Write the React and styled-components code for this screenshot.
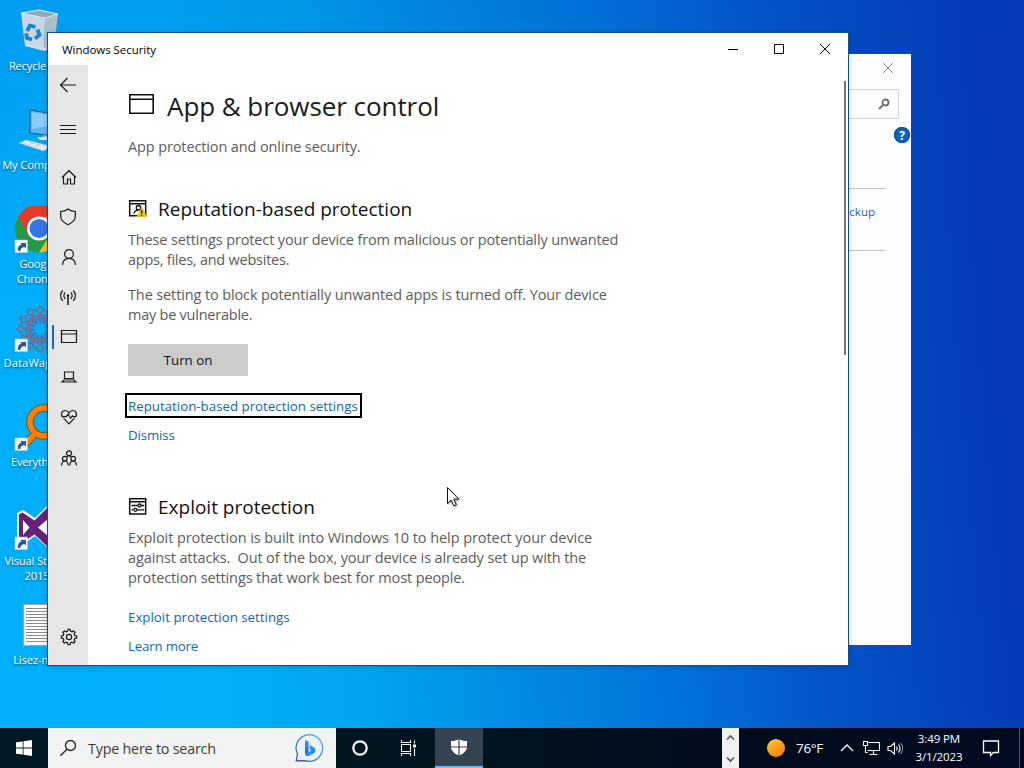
import React from 'react';
import styled, { createGlobalStyle } from 'styled-components';

const GlobalStyle = createGlobalStyle`
  body {
    margin: 0;
    overflow: hidden;
    font-family: 'Open Sans', 'Noto Sans', sans-serif;
  }
`;

const Desktop = styled.div`
  position: relative;
  display: flex;
  flex-direction: column;
  width: 1024px;
  height: 768px;
  overflow: hidden;
  background:
    linear-gradient(to bottom, rgba(0, 70, 190, 0.16) 0%, rgba(0, 70, 190, 0) 40%),
    linear-gradient(85deg, #00aefb 0%, #00aff8 21%, #00a5f0 34%, #0091e5 45%, #0072d8 63%, #0455c8 76%, #0445be 87%, #033ab4 95%, #0338b2 100%);
`;

const Workspace = styled.div`
  position: relative;
  flex: 1;
`;

const IconColumn = styled.div`
  display: flex;
  flex-direction: column;
  width: 74px;
  padding-top: 8px;
`;

const Shortcut = styled.div`
  display: flex;
  flex-direction: column;
  align-items: center;
  gap: 2px;
  height: 99px;
  font-size: 11.2px;
  line-height: 15px;
  letter-spacing: ${(p) => p.$track || -0.15}px;
  color: #fff;
  text-align: center;
  white-space: pre;
  text-shadow: 0 1px 2px rgba(0, 0, 0, 0.6);

  svg {
    flex: none;
  }
`;

/* ---- windows ---- */

const BackWindow = styled.div`
  position: absolute;
  left: 600px;
  top: 54px;
  width: 311px;
  height: 591px;
  box-sizing: border-box;
  display: flex;
  flex-direction: column;
  align-items: flex-end;
  background: #fefefe;
`;

const BackClose = styled.div`
  display: flex;
  padding: 8px 17px 0 0;
  height: 27px;
`;

const BackSearch = styled.div`
  display: flex;
  align-items: center;
  justify-content: flex-end;
  width: 260px;
  height: 30px;
  margin-right: 12px;
  padding-right: 8px;
  box-sizing: border-box;
  border: 1px solid #d2d2d2;
`;

const Help = styled.div`
  display: flex;
  align-items: center;
  justify-content: center;
  width: 16px;
  height: 16px;
  margin: 8px 1px 45px 0;
  border-radius: 50%;
  background: #0a63b4;
  box-shadow: inset 0 0 0 1px #084d90;
  color: #fff;
  font-size: 12px;
  font-weight: 700;
`;

const BackPanel = styled.div`
  display: flex;
  justify-content: flex-end;
  width: 250px;
  height: 63px;
  margin-right: 26px;
  padding: 15px 10px 0 0;
  box-sizing: border-box;
  border-top: 1px solid #c4c4c4;
  border-bottom: 1px solid #c4c4c4;
  color: #1a5fb8;
  font-size: 11.5px;
  line-height: 16px;
`;

const Window = styled.div`
  position: absolute;
  left: 47px;
  top: 32px;
  width: 802px;
  height: 634px;
  box-sizing: border-box;
  display: flex;
  flex-direction: column;
  border: 1px solid #14507f;
  background: #fff;
  box-shadow: 0 1px 5px rgba(0, 0, 40, 0.2);
`;

const TitleBar = styled.div`
  display: flex;
  align-items: center;
  height: 32px;
  padding-left: 14px;
  font-size: 11.5px;
  color: #000;
`;

const TitleText = styled.span`
  flex: 1;
  letter-spacing: -0.05px;
`;

const WindowButton = styled.div`
  display: flex;
  align-items: center;
  justify-content: center;
  width: 46px;
  height: 32px;
`;

const WindowBody = styled.div`
  display: flex;
  flex: 1;
  min-height: 0;
`;

const Sidebar = styled.div`
  display: flex;
  flex-direction: column;
  width: 40px;
  padding-bottom: 8px;
  box-sizing: border-box;
  background: #e6e6e6;
`;

const NavItem = styled.div`
  display: flex;
  align-items: center;
  justify-content: center;
  height: 40px;
  margin-top: ${(p) => p.$gap || 0}px;
  padding-left: ${(p) => (p.$flush ? 0 : 2)}px;
  box-sizing: border-box;
  background: ${(p) =>
    p.$active ? 'linear-gradient(#1a66b8, #1a66b8) 4px 8px / 2px 24px no-repeat' : 'none'};
`;

const Spacer = styled.div`
  flex: 1;
`;

const Content = styled.div`
  flex: 1;
  padding: 23px 0 0 40px;
  overflow: hidden;
`;

const PageTitle = styled.div`
  display: flex;
  align-items: center;
  gap: 12px;
  height: 36px;
  font-size: 26px;
  font-weight: 400;
  line-height: 36px;
  letter-spacing: -0.06px;
  color: #1a1a1a;
  white-space: nowrap;

  svg {
    margin-bottom: 4px;
  }
`;

const SectionTitle = styled.div`
  display: flex;
  align-items: center;
  gap: 11px;
  height: 28px;
  margin-top: ${(p) => p.$top}px;
  font-size: 19px;
  line-height: 28px;
  color: #111;
  white-space: nowrap;

  svg {
    margin-bottom: 2px;
  }
`;

const Text = styled.div`
  margin-top: ${(p) => p.$top || 0}px;
  font-size: 14.5px;
  line-height: 20px;
  letter-spacing: ${(p) => p.$track || -0.12}px;
  color: #5c5c5c;
  white-space: pre;
`;

const ActionButton = styled.div`
  display: flex;
  align-items: center;
  justify-content: center;
  width: 120px;
  height: 32px;
  margin-top: 19px;
  background: #cbcbcb;
  font-size: 13.3px;
  color: #111;
`;

const Link = styled.div`
  width: max-content;
  margin-top: ${(p) => p.$top}px;
  font-size: 13.3px;
  line-height: 21px;
  letter-spacing: ${(p) => p.$track || 0}px;
  color: #1068ae;
  white-space: nowrap;
`;

const FocusedLink = styled(Link)`
  width: 237px;
  height: 25px;
  margin-left: -3px;
  padding: 1px 0 0 1px;
  box-sizing: border-box;
  border: 2px solid #000;
`;

const ScrollTrack = styled.div`
  width: 4px;
  padding-top: 16px;
`;

const ScrollThumb = styled.div`
  width: 2px;
  height: 274px;
  background: #757575;
`;

const Cursor = styled.svg`
  position: absolute;
  left: 446px;
  top: 486px;
  filter: drop-shadow(1px 1px 1px rgba(0, 0, 0, 0.35));
`;

/* ---- taskbar ---- */

const Taskbar = styled.div`
  display: flex;
  align-items: stretch;
  height: 40px;
  background: linear-gradient(90deg, #001824 0%, #00141f 45%, #000c1c 70%, #010a20 100%);
  color: #fff;
`;

const TaskButton = styled.div`
  display: flex;
  align-items: center;
  justify-content: center;
  width: ${(p) => p.$w || 48}px;
  margin-left: ${(p) => p.$left || 0}px;
  box-sizing: border-box;
  background: ${(p) => (p.$active ? '#344450' : 'none')};
  border-bottom: ${(p) => (p.$active ? '2px solid #7bb9ec' : 'none')};
`;

const SearchBox = styled.div`
  display: flex;
  align-items: center;
  width: 288px;
  padding: 0 12px 0 11px;
  box-sizing: border-box;
  background: #f2f3f3;
  color: #3c3c3c;
  font-size: 14.3px;
`;

const SearchLabel = styled.span`
  flex: 1;
  margin-left: 11px;
  letter-spacing: -0.2px;
`;

const DeskScroll = styled.div`
  display: flex;
  flex-direction: column;
  align-items: center;
  justify-content: space-between;
  width: 17px;
  margin-left: 239px;
  padding: 6px 0 5px;
  box-sizing: border-box;
  background: #f1f1f1;
`;

const Tray = styled.div`
  display: flex;
  flex: 1;
  align-items: center;
`;

const Sun = styled.div`
  width: 18px;
  height: 18px;
  margin: 0 11px 0 28px;
  border-radius: 50%;
  background: linear-gradient(150deg, #ffc52e 10%, #f7941d 60%, #ee7a12 100%);
`;

const Temperature = styled.span`
  width: 44px;
  font-size: 13.5px;
  letter-spacing: -0.3px;
`;

const Clock = styled.div`
  width: 62px;
  margin-left: 4px;
  font-size: 11.6px;
  line-height: 18px;
  letter-spacing: -0.15px;
  text-align: center;
  white-space: nowrap;
`;

const ShowDesktop = styled.div`
  width: 4px;
  height: 40px;
  margin-left: auto;
  border-left: 1px solid #4d5a6b;
`;

/* ---- icons ---- */

const Glyph = ({ w = 18, h = w, children, color = '#1a1a1a', sw = 1.2 }) => (
  <svg width={w} height={h} viewBox={`0 0 ${w} ${h}`} fill="none" stroke={color} strokeWidth={sw}>
    {children}
  </svg>
);

const BackIcon = () => (
  <Glyph w={18}>
    <path d="M17 9H1.500M8.500 2 1.500 9l7 7" />
  </Glyph>
);

const MenuIcon = () => (
  <Glyph w={18}>
    <path d="M1 5.500h16M1 9.500h16M1 13.500h16" shapeRendering="crispEdges" />
  </Glyph>
);

const HomeIcon = () => (
  <Glyph w={18}>
    <path d="M2 9.500 9 2.700l7 6.800M3.500 8.500V16h4v-5h3v5h4V8.500" />
  </Glyph>
);

const ShieldIcon = () => (
  <Glyph w={18}>
    <path d="M9 1c2 1.600 4.500 2.400 7.300 2.500v4.800c0 3.700-2.900 6.400-7.300 8.400-4.400-2-7.300-4.700-7.300-8.400V3.500C4.500 3.400 7 2.600 9 1z" />
  </Glyph>
);

const PersonIcon = () => (
  <Glyph w={18}>
    <circle cx="9" cy="6" r="4.400" />
    <path d="M2.500 17c.3-4 2.900-6.600 6.500-6.600s6.200 2.600 6.500 6.600" />
  </Glyph>
);

const SignalIcon = () => (
  <Glyph w={18}>
    <path d="M9 8v9" strokeWidth="1.500" />
    <circle cx="9" cy="7.500" r="1.200" fill="#1a1a1a" stroke="none" />
    <path d="M6.300 4.500a4.300 4.300 0 0 0 0 6.400M11.700 4.500a4.300 4.300 0 0 1 0 6.400M3.800 2.500a7.300 7.300 0 0 0 0 10.400M14.200 2.500a7.300 7.300 0 0 1 0 10.400" />
  </Glyph>
);

const BrowserIcon = () => (
  <Glyph w={18}>
    <path d="M1.500 2.500h15v12h-15zM1.500 6h15" />
  </Glyph>
);

const LaptopIcon = () => (
  <Glyph w={18}>
    <path d="M4.500 4h9v6.500h-9zM4 12h10l2 2H2z" />
  </Glyph>
);

const HeartIcon = () => (
  <Glyph w={18}>
    <path d="M2.300 8.300C.8 6 1.700 3 4.400 2.600 6.500 2.200 8 3.300 9 5c1-1.700 2.500-2.800 4.600-2.400C16.300 3 17.200 6 15.700 8.300M3.500 10.200 9 15.800l5.500-5.600M1.500 8.700h4.700l2-2.400 2.500 3.900 1.900-2.400 1 .9h2.900" />
  </Glyph>
);

const FamilyIcon = () => (
  <Glyph w={18}>
    <circle cx="9" cy="4.300" r="2.500" />
    <circle cx="4.800" cy="9.700" r="2.300" />
    <circle cx="13.200" cy="9.700" r="2.300" />
    <path d="M1.500 16.500c.2-2.700 1.300-4.500 3.300-4.500S8 13.800 8.200 16.500M9.800 16.500c.2-2.700 1.400-4.500 3.400-4.500s3.100 1.800 3.300 4.500M6.800 7.700c.7-.8 1.400-1.100 2.200-1.100s1.500.3 2.200 1.100" />
  </Glyph>
);

const GearIcon = () => (
  <Glyph w={18}>
    <path
      d="M7.560 3.190 7.900 1.380h2.200l.34 1.810 1.650.68 1.520-1.040 1.560 1.560-1.040 1.520.68 1.650 1.810.34v2.200l-1.810.34-.68 1.650 1.040 1.520-1.560 1.560-1.520-1.040-1.650.68-.34 1.810H7.900l-.34-1.810-1.650-.68-1.520 1.040-1.560-1.560 1.040-1.520-.68-1.650-1.810-.34V7.900l1.810-.34.68-1.650-1.040-1.520 1.560-1.560 1.520 1.040z"
      strokeLinejoin="round"
    />
    <circle cx="9" cy="9" r="2.600" />
  </Glyph>
);

const PageIcon = () => (
  <svg width="27" height="22" fill="none" stroke="#111" strokeWidth="1.600">
    <path d="M1.800 1.800h23.400v18.400H1.800zM1.800 6.200h23.400" />
  </svg>
);

const ReputationIcon = () => (
  <svg width="19" height="19" fill="none" stroke="#111" strokeWidth="1.500">
    <path d="M1.700 1.700h16v15h-16zM1.700 4.700h16" />
    <circle cx="10.500" cy="8.700" r="2.200" strokeWidth="1.300" />
    <path d="M5.500 14.500c1-2.300 2.500-3.400 5-3.400" strokeWidth="1.300" />
    <path d="M13.800 7.500 19 18H8.500z" fill="#f5bd18" stroke="none" />
    <path d="M13.700 11v3.400M13.700 15.400v1.300" strokeWidth="1.300" />
  </svg>
);

const ExploitIcon = () => (
  <svg width="19" height="19" fill="none" stroke="#111" strokeWidth="1.500">
    <path d="M1.700 1.700h16v15.300h-16zM1.700 4.700h16" />
    <path d="M3.500 8.500h6.200M13 8.500h3.200M3.500 12.800h2.200M9 12.800h7.200" strokeWidth="1.300" />
    <circle cx="11.400" cy="8.500" r="1.500" strokeWidth="1.300" />
    <circle cx="7.400" cy="12.800" r="1.500" strokeWidth="1.300" />
  </svg>
);

const ShortcutArrow = () => (
  <g>
    <rect x="2" y="34" width="12.500" height="12.500" fill="#f5f8fb" stroke="#b9c9d8" strokeWidth=".5" />
    <path d="M5 45c-.5-3.500.6-5.600 3.600-6.400L7.200 37H13v5.600l-1.600-1.500C9 41.600 7.500 42.500 7.300 45z" fill="#2a5a9c" />
  </g>
);

const DesktopSvg = ({ children }) => (
  <svg width="48" height="48" viewBox="0 0 48 48">
    {children}
  </svg>
);

const RecycleIcon = () => (
  <DesktopSvg>
    <path d="M8 5 32 10l-1 32-19-4z" fill="#c6d8e4" />
    <path d="m32 10 13-4-4 33-10 3z" fill="#aebfca" />
    <path d="M8 5 26 2l19 4-13 4z" fill="#8fabbb" stroke="#dcebf4" />
    <path d="m12 36 19 4 10-3-.5 3-9.500 3-18.500-5z" fill="#d9dee2" />
    <g fill="none" stroke="#1e80cf" strokeWidth="3.800">
      <path d="m14 23 3-5.500 5.500 1.500M24.500 21.500l2 5.500-4.500 3.500M19 31.500l-5-1.500-1-4.500" />
    </g>
  </DesktopSvg>
);

const ComputerIcon = () => (
  <DesktopSvg>
    <path d="m17 3 29 5v22l-29-4z" fill="#59b5f5" stroke="#1d4e7b" />
    <path d="m19 5 26 5v7L19 22z" fill="#8bcdf8" />
    <path d="m30 28 9 1.500v4l-9-1z" fill="#a8bac6" />
    <path d="M24 30h18l3 3H27z" fill="#dce5ec" />
    <path d="m6 36 7-3 24 6-6 5z" fill="#eef3f6" stroke="#a8bccb" strokeWidth=".6" />
    <path d="m9 35.500 21 6M12 34l21 6M15 38l5-3M22 40l5-3" stroke="#b6c6d2" strokeWidth=".7" />
  </DesktopSvg>
);

const ChromeIcon = () => (
  <DesktopSvg>
    <circle cx="26" cy="22.500" r="24" fill="#279847" />
    <path d="M5.200 10.500A24 24 0 0 1 47 11H26L15.600 28.500z" fill="#e33b2e" />
    <path d="M47 11a24 24 0 0 1-21 35.500L37 28.500 26 11z" fill="#fbc116" />
    <circle cx="26" cy="22.500" r="12" fill="#fff" />
    <circle cx="26" cy="22.500" r="9.500" fill="#3476e5" />
    <ShortcutArrow />
  </DesktopSvg>
);

const DataIcon = () => (
  <DesktopSvg>
    <g fill="none" stroke="#77698c" strokeWidth="1.500">
      {[0, 30, 60, 90, 120, 150, 180, 210, 240, 270, 300, 330].map((a) => (
        <path
          key={a}
          transform={`rotate(${a} 27 24)`}
          d="M27 15V8l-4-3 4-4 4 4-4 3M24 15l-3-5M30 15l3-5"
        />
      ))}
      <circle cx="27" cy="24" r="8" stroke="#4a73b4" strokeWidth="4" strokeDasharray="3 1.500" />
      <circle cx="27" cy="24" r="14" strokeDasharray="4 2" />
    </g>
    <ShortcutArrow />
  </DesktopSvg>
);

const EverythingIcon = () => (
  <DesktopSvg>
    <g fill="none" strokeLinecap="round">
      <path d="m19 33-7 7" stroke="#93500c" strokeWidth="8" />
      <circle cx="31" cy="18" r="14" stroke="#93500c" strokeWidth="7.500" />
      <path d="m19 33-7 7" stroke="#ff8000" strokeWidth="6" />
      <circle cx="31" cy="18" r="14" stroke="#ff8000" strokeWidth="5.500" />
    </g>
    <ShortcutArrow />
  </DesktopSvg>
);

const VisualStudioIcon = () => (
  <DesktopSvg>
    <path d="M37 0 22 15 10 7 4 10v29l5 3 13-9 14 13 10-4V2z" fill="#fff" />
    <path
      d="M36 3 21.500 17.500 9.500 9.500 6 11.500v26l3.500 2 12-8L36 45l8-3V5zM10 17l6.500 7.500L10 32zM36 15v19l-11-9.500z"
      fill="#68217a"
      fillRule="evenodd"
    />
    <ShortcutArrow />
  </DesktopSvg>
);

const TextFileIcon = () => (
  <DesktopSvg>
    <path d="M10.500 2.500h29v41h-29z" fill="#fdfdfd" stroke="#a9a49b" />
    <path
      d="M13 6.500h24M13 9.500h24M13 12.500h24M13 15.500h24M13 18.500h24M13 21.500h24M13 24.500h24M13 27.500h24M13 30.500h24M13 33.500h24M13 36.500h24M13 39.500h24"
      stroke="#8b8b8b"
      strokeWidth="1"
    />
  </DesktopSvg>
);

const BingIcon = () => (
  <svg width="30" height="30" viewBox="0 0 30 30" fill="none">
    <defs>
      <linearGradient id="ring" x1="0" y1="1" x2="1" y2="0">
        <stop offset="0" stopColor="#2a4b9c" />
        <stop offset="1" stopColor="#54b4ea" />
      </linearGradient>
      <linearGradient id="stem" x1="0" y1="0" x2="0" y2="1">
        <stop offset="0" stopColor="#3a9fe8" />
        <stop offset="1" stopColor="#1f5fd6" />
      </linearGradient>
    </defs>
    <path d="M2.200 27.800 3.500 21A13.300 13.300 0 1 1 15.500 28.300c-1.500 0-3-.2-4.300-.7z" fill="#eaf2fa" stroke="url(#ring)" strokeWidth="1.200" />
    <path d="m11 7 2.600 1c.7.300 1 .8 1 1.500v9.800L11 21.500z" fill="url(#stem)" />
    <path d="m15.300 12 4.400 2.200c2.200 1 2.300 4.700.3 6l-4.700 2.500c-2 1-4.300.3-4.300-1.900l6-2.700-1.200-2.300z" fill="#268fe8" />
  </svg>
);

const navItems = [
  { icon: HomeIcon, gap: 8 },
  { icon: ShieldIcon, flush: true },
  { icon: PersonIcon },
  { icon: SignalIcon, flush: true },
  { icon: BrowserIcon, active: true },
  { icon: LaptopIcon },
  { icon: HeartIcon },
  { icon: FamilyIcon, gap: 1 },
];

const shortcuts = [
  { icon: RecycleIcon, label: 'Recycle Bin', track: -0.2 },
  { icon: ComputerIcon, label: 'My Computer' },
  { icon: ChromeIcon, label: 'Google\nChrome', track: -0.25 },
  { icon: DataIcon, label: 'DataWagons', track: 0.1 },
  { icon: EverythingIcon, label: 'Everything', track: -0.3 },
  { icon: VisualStudioIcon, label: 'Visual Studio\n2015' },
  { icon: TextFileIcon, label: 'Lisez-moi' },
];

function SecurityWindow() {
  return (
    <Window>
      <TitleBar>
        <TitleText>Windows Security</TitleText>
        <WindowButton>
          <Glyph w={12} color="#000" sw={1}><path d="M1 6.500h10" /></Glyph>
        </WindowButton>
        <WindowButton>
          <Glyph w={12} color="#000" sw={1}><path d="M1.500 1.500h9v9h-9z" /></Glyph>
        </WindowButton>
        <WindowButton>
          <Glyph w={12} color="#000" sw={1}><path d="m1 1 10 10M11 1 1 11" /></Glyph>
        </WindowButton>
      </TitleBar>
      <WindowBody>
        <Sidebar>
          <NavItem $flush><BackIcon /></NavItem>
          <NavItem $gap={4} $flush><MenuIcon /></NavItem>
          {navItems.map(({ icon: Icon, gap, active, flush }, i) => (
            <NavItem key={i} $gap={gap} $active={active} $flush={flush}><Icon /></NavItem>
          ))}
          <Spacer />
          <NavItem><GearIcon /></NavItem>
        </Sidebar>
        <Content>
          <PageTitle><PageIcon />App &amp; browser control</PageTitle>
          <Text $top={13}>App protection and online security.</Text>
          <SectionTitle $top={38}><ReputationIcon />Reputation-based protection</SectionTitle>
          <Text $top={7} $track={-0.14}>These settings protect your device from malicious or potentially unwanted</Text>
          <Text $track={-0.24}>apps, files, and websites.</Text>
          <Text $top={15}>The setting to block potentially unwanted apps is turned off. Your device</Text>
          <Text $track={-0.24}>may be vulnerable.</Text>
          <ActionButton>Turn on</ActionButton>
          <FocusedLink $top={17}>Reputation-based protection settings</FocusedLink>
          <Link $top={7} $track={-0.15}>Dismiss</Link>
          <SectionTitle $top={47}><ExploitIcon />Exploit protection</SectionTitle>
          <Text $top={7} $track={-0.07}>Exploit protection is built into Windows 10 to help protect your device</Text>
          <Text>against attacks.  Out of the box, your device is already set up with the</Text>
          <Text>protection settings that work best for most people.</Text>
          <Link $top={19}>Exploit protection settings</Link>
          <Link $top={8} $track={-0.2}>Learn more</Link>
        </Content>
        <ScrollTrack><ScrollThumb /></ScrollTrack>
      </WindowBody>
    </Window>
  );
}

function App() {
  return (
    <Desktop>
      <GlobalStyle />
      <Workspace>
        <IconColumn>
          {shortcuts.map(({ icon: Icon, label, track }) => (
            <Shortcut key={label} $track={track}><Icon />{label}</Shortcut>
          ))}
        </IconColumn>
        <BackWindow>
          <BackClose>
            <Glyph w={12} color="#8a8a8a" sw={1}><path d="m1 1 10 10M11 1 1 11" /></Glyph>
          </BackClose>
          <BackSearch>
            <Glyph w={12} color="#6c6c6c" sw={1.8}>
              <circle cx="7.500" cy="4.500" r="3" />
              <path d="M5.500 6.500 1 11" />
            </Glyph>
          </BackSearch>
          <Help>?</Help>
          <BackPanel>File History backup</BackPanel>
        </BackWindow>
        <SecurityWindow />
        <Cursor width="16" height="22" viewBox="0 0 16 22">
          <path d="M1.500 1.500v16l3.700-3.400 2.500 5.700 2.600-1.100-2.500-5.600h5z" fill="#fff" stroke="#111" />
        </Cursor>
      </Workspace>
      <Taskbar>
        <TaskButton>
          <svg width="16" height="16" fill="#fff">
            <path d="M0 2.300 6.700 1.400v6.200H0zM7.500 1.300 16 0v7.600H7.500zM0 8.400h6.700v6.200L0 13.700zM7.500 8.400H16V16l-8.500-1.300z" />
          </svg>
        </TaskButton>
        <SearchBox>
          <Glyph w={18} color="#222" sw={1.3}>
            <circle cx="11.500" cy="6.500" r="5" />
            <path d="M8 10.200 1.300 16.800" />
          </Glyph>
          <SearchLabel>Type here to search</SearchLabel>
          <BingIcon />
        </SearchBox>
        <TaskButton>
          <Glyph w={18} color="#f4f6f7" sw={2.2}><circle cx="9" cy="9" r="6.700" /></Glyph>
        </TaskButton>
        <TaskButton>
          <Glyph w={18} color="#f4f6f7" sw={1.1}>
            <path d="M2.500 5.500h9v7h-9zM2.500 1v2.500h9V1M2.500 17v-2.500h9V17M15.500 1.500v3M15.500 9.500V17" />
            <path d="M14 5.500h3v3h-3z" fill="#fff" stroke="none" />
          </Glyph>
        </TaskButton>
        <TaskButton $active $left={3}>
          <svg width="18" height="20" viewBox="0 0 18 20">
            <path d="M9 2c2 1.400 4.600 2 8 2.100v5.600c0 4-3.300 6.700-8 8.900-4.700-2.200-8-4.900-8-8.900V4.100C4.400 4 7 3.400 9 2z" fill="#fff" />
            <path d="M9 1v18M1 10h16" stroke="#344450" strokeWidth="1.200" />
          </svg>
        </TaskButton>
        <DeskScroll>
          <Glyph w={9} h={7} color="#555" sw={1.6}><path d="M1 5.500 4.500 2 8 5.500" /></Glyph>
          <Glyph w={9} h={7} color="#555" sw={1.6}><path d="M1 1.500 4.500 5 8 1.500" /></Glyph>
        </DeskScroll>
        <Tray>
          <Sun />
          <Temperature>76°F</Temperature>
          <Glyph w={14} h={10} color="#fff" sw={1.3}><path d="M1 8 7 2l6 6" /></Glyph>
          <TaskButton $w={17} $left={9}>
            <Glyph w={17} color="#fff" sw={1.1}>
              <path d="M5.500 2.500h11v8h-12M10.500 10.500v3.500M6.500 14.500h8M.500 1.500h4v4h-4zM2.500 5.500v7h2" />
            </Glyph>
          </TaskButton>
          <TaskButton $w={17} $left={7}>
            <Glyph w={17} color="#fff" sw={1.1}>
              <path d="M1 6.500h2.500L7.500 3v11L3.500 10.500H1zM9.500 6.500c.9 1.300.9 2.700 0 4M11.500 4.500c1.900 2.500 1.900 5.500 0 8" />
              <path d="M13.500 2.800c2.700 3.500 2.700 7.900 0 11.400" stroke="#7d8691" />
            </Glyph>
          </TaskButton>
          <Clock>3:49 PM<br />3/1/2023</Clock>
          <TaskButton $w={18} $left={12}>
            <Glyph w={18} color="#fff" sw={1.3}>
              <path d="M1.500 2h15v11.500h-5L8.500 16.500v-3h-7z" />
            </Glyph>
          </TaskButton>
          <ShowDesktop />
        </Tray>
      </Taskbar>
    </Desktop>
  );
}

export default App;
